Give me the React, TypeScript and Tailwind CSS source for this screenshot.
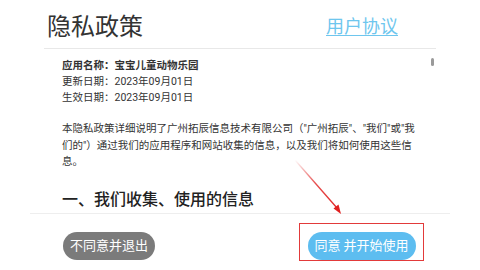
export default function App() {
  return (
    <div className="relative w-[480px] h-[270px] overflow-hidden bg-white font-['Roboto','Noto_Sans_CJK_SC',sans-serif] text-[#333]">
      {/* header */}
      <div className="mx-[44px] h-[49px] pt-[5px] pl-[3px] pr-[38px] flex items-center justify-between border-b border-[#e8e8e8]">
        <h1 className="text-[24px] leading-[28px] text-[#333]">隐私政策</h1>
        <a className="text-[18px] leading-[22px] text-[#6ec6ee] underline underline-offset-2 decoration-1">用户协议</a>
      </div>

      {/* scrollable body */}
      <div className="mx-[44px] h-[164px] overflow-hidden pl-[18px] pr-[14px] pt-[9px]">
        <div className="text-[10.5px] leading-[16px]">
          <p className="font-bold">应用名称：宝宝儿童动物乐园</p>
          <p>更新日期：2023年09月01日</p>
          <p>生效日期：2023年09月01日</p>
        </div>
        <p className="mt-[15px] text-[10.5px] leading-[16.5px] whitespace-nowrap">
          本隐私政策详细说明了广州拓辰信息技术有限公司（"广州拓辰"、"我们"或"我
          <br />
          们的"）通过我们的应用程序和网站收集的信息，以及我们将如何使用这些信
          <br />
          息。
        </p>
        <h2 className="mt-[19px] text-[16px] leading-[20px] font-medium text-[#222]">一、我们收集、使用的信息</h2>
      </div>

      {/* footer */}
      <div className="mx-[30px] border-t border-[#eeeeee] pl-[33px] pr-[26px] flex justify-between items-start">
        <button className="mt-[18px] w-[92px] h-[28px] rounded-full bg-[#7b7b7b] text-white text-[13px] leading-[28px]">
          不同意并退出
        </button>
        <div className="mt-[9px] border-[1.5px] border-[#e23a3a] px-[7.5px] pt-[7.5px] pb-[0.5px]">
          <button className="w-[108px] h-[28px] rounded-full bg-[#5dbdf0] text-white text-[13px] leading-[28px]">
            同意 并开始使用
          </button>
        </div>
      </div>

      {/* scrollbar thumb */}
      <div className="absolute left-[431px] top-[58px] w-[3px] h-[8px] rounded-full bg-[#9a9a9a]" />

      {/* annotation arrow */}
      <svg className="absolute left-0 top-0 pointer-events-none" width="480" height="270" viewBox="0 0 480 270">
        <defs>
          <linearGradient id="arr" x1="295" y1="160" x2="340" y2="213" gradientUnits="userSpaceOnUse">
            <stop offset="0" stopColor="#e02020" stopOpacity="0" />
            <stop offset="0.45" stopColor="#e02020" stopOpacity="0.8" />
            <stop offset="1" stopColor="#e02020" stopOpacity="1" />
          </linearGradient>
        </defs>
        <line x1="295" y1="160" x2="337" y2="208" stroke="url(#arr)" strokeWidth="1.3" />
        <polygon points="341,214 333.5,208.5 338.5,204.5" fill="#e02020" />
      </svg>
    </div>
  );
}
